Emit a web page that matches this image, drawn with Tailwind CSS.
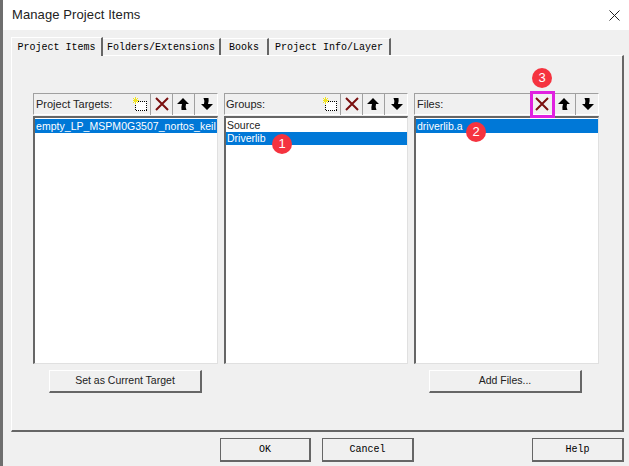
<!DOCTYPE html>
<html lang="en">
<head>
  <meta charset="UTF-8">
  <title>Manage Project Items</title>
  <script src="https://cdn.jsdelivr.net/npm/@tailwindcss/browser@4"></script>
</head>
<body class="w-[629px] h-[466px] overflow-hidden bg-[#f0f0f0] font-['Liberation_Sans',sans-serif] text-[11px] text-black">
<div class="relative w-[629px] h-[466px] flex flex-col">
  <!-- title bar -->
  <div class="h-[30px] bg-white flex items-center justify-between pl-[12px] pr-[9px] text-[13px] text-[#222]">
    <span class="tracking-[0.1px]">Manage Project Items</span>
    <svg width="11" height="11" viewBox="0 0 11 11" fill="none" stroke="#222" stroke-width="1"><path d="M0.500 0.500l10 10M10.500 0.500l-10 10"/></svg>
  </div>

  <!-- tabs -->
  <div class="h-[25px] pl-[11px] pt-[7px] flex items-end font-['Liberation_Mono',monospace] text-[10px] text-black">
    <div class="h-[19px] w-[92px] flex items-center justify-center bg-[#f0f0f0] border-t border-l border-white border-r-2 border-r-[#666] relative z-10 top-px">Project Items</div>
    <div class="h-[17px] w-[118px] flex items-center justify-center border-t border-white border-r-2 border-r-[#666]">Folders/Extensions</div>
    <div class="h-[17px] w-[48px] flex items-center justify-center border-t border-white border-r-2 border-r-[#666]">Books</div>
    <div class="h-[17px] w-[122px] flex items-center justify-center border-t border-white border-r-2 border-r-[#666]">Project Info/Layer</div>
  </div>

  <!-- tab panel -->
  <div class="ml-[11px] w-[613px] h-[377px] border-t border-l border-white border-r-2 border-r-[#666] border-b-2 border-b-[#666] pt-[37px] pl-[21px]">
    <div class="flex gap-[6px]">
      <div class="w-[185px]">
        <div class="h-[22px] flex items-center justify-between border border-[#a0a0a0] border-b-white border-r-white pl-[2px] mb-[1px]">
          <span class="text-[#222]">Project Targets:</span>
          <div class="flex">
            <div class="w-[21px] h-[21px] flex items-center justify-center border-r border-[#a0a0a0]">
              <svg width="15" height="15" viewBox="0 0 15 15" shape-rendering="crispEdges"><rect x="2.5" y="4.5" width="11" height="9" fill="#fff" stroke="#000" stroke-dasharray="1 1"/><path d="M0 1l5 5M5 1L0 6M2.500 0v7M0 3.500h6" stroke="#f2e41c" stroke-width="1"/></svg>
            </div>
            <div class="w-[22px] h-[21px] flex items-center justify-center border-r border-[#a0a0a0]">
              <svg width="14" height="14" viewBox="0 0 14 14" fill="none" stroke="#7a1010" stroke-width="2"><path d="M1 1l12 12M13 1L1 13"/></svg>
            </div>
            <div class="w-[22px] h-[21px] flex items-center justify-center border-r border-[#a0a0a0]">
              <svg width="13" height="14" viewBox="0 0 13 14"><path d="M6 1L12 7H9Q8 10 9.500 13H4.500Q4 10 5 7H0Z" fill="#000"/></svg>
            </div>
            <div class="w-[22px] h-[21px] flex items-center justify-center">
              <svg width="13" height="14" viewBox="0 0 13 14"><path d="M7 13L13 7H8Q9 4 8.500 1H3.500Q5 4 4 7H1Z" fill="#000"/></svg>
            </div>
          </div>
        </div>
        <div class="h-[248px] bg-white border-t-2 border-l-2 border-[#666] border-r border-b border-r-[#e0e0e0] border-b-[#e0e0e0] pt-px">
          <div class="h-[14px] leading-[14px] bg-[#0078d7] text-white pl-[1px] text-[10.5px] tracking-[0.04px] whitespace-nowrap">empty_LP_MSPM0G3507_nortos_keil</div>
        </div>
      </div>

      <div class="w-[184px]">
        <div class="h-[22px] flex items-center justify-between border border-[#a0a0a0] border-b-white border-r-white pl-[1px] mb-[1px]">
          <span class="text-[#222]">Groups:</span>
          <div class="flex">
            <div class="w-[21px] h-[21px] flex items-center justify-center border-r border-[#a0a0a0]">
              <svg width="15" height="15" viewBox="0 0 15 15" shape-rendering="crispEdges"><rect x="2.5" y="4.5" width="11" height="9" fill="#fff" stroke="#000" stroke-dasharray="1 1"/><path d="M0 1l5 5M5 1L0 6M2.500 0v7M0 3.500h6" stroke="#f2e41c" stroke-width="1"/></svg>
            </div>
            <div class="w-[22px] h-[21px] flex items-center justify-center border-r border-[#a0a0a0]">
              <svg width="14" height="14" viewBox="0 0 14 14" fill="none" stroke="#7a1010" stroke-width="2"><path d="M1 1l12 12M13 1L1 13"/></svg>
            </div>
            <div class="w-[22px] h-[21px] flex items-center justify-center border-r border-[#a0a0a0]">
              <svg width="13" height="14" viewBox="0 0 13 14"><path d="M6 1L12 7H9Q8 10 9.500 13H4.500Q4 10 5 7H0Z" fill="#000"/></svg>
            </div>
            <div class="w-[22px] h-[21px] flex items-center justify-center">
              <svg width="13" height="14" viewBox="0 0 13 14"><path d="M7 13L13 7H8Q9 4 8.500 1H3.500Q5 4 4 7H1Z" fill="#000"/></svg>
            </div>
          </div>
        </div>
        <div class="h-[248px] bg-white border-t-2 border-l-2 border-[#666] border-r border-b border-r-[#e0e0e0] border-b-[#e0e0e0] pt-px text-[10.5px]">
          <div class="h-[13px] leading-[13px] pl-[1px] text-[#222]">Source</div>
          <div class="h-[13px] leading-[13px] bg-[#0078d7] text-white pl-[1px]">Driverlib</div>
        </div>
      </div>

      <div class="w-[185px]">
        <div class="h-[22px] flex items-center justify-between border border-[#a0a0a0] border-b-white border-r-white pl-[2px] mb-[1px]">
          <span class="text-[#222]">Files:</span>
          <div class="flex">
            <div class="w-[22px] h-[21px] flex items-center justify-center">
              <svg width="14" height="14" viewBox="0 0 14 14" fill="none" stroke="#7a1010" stroke-width="2"><path d="M1 1l12 12M13 1L1 13"/></svg>
            </div>
            <div class="w-[23px] h-[21px] flex items-center justify-center border-r border-[#a0a0a0]">
              <svg width="13" height="14" viewBox="0 0 13 14"><path d="M6 1L12 7H9Q8 10 9.500 13H4.500Q4 10 5 7H0Z" fill="#000"/></svg>
            </div>
            <div class="w-[22px] h-[21px] flex items-center justify-center">
              <svg width="13" height="14" viewBox="0 0 13 14"><path d="M7 13L13 7H8Q9 4 8.500 1H3.500Q5 4 4 7H1Z" fill="#000"/></svg>
            </div>
          </div>
        </div>
        <div class="h-[248px] bg-white border-t-2 border-l-2 border-[#666] border-r border-b border-r-[#e0e0e0] border-b-[#e0e0e0] pt-px text-[10.5px]">
          <div class="h-[14px] leading-[14px] bg-[#0078d7] text-white pl-[1px]">driverlib.a</div>
        </div>
      </div>
    </div>

    <div class="flex mt-[6px] text-[10.5px]">
      <button class="ml-[16px] w-[153px] h-[23px] flex items-center justify-center border-t border-l border-white border-r-2 border-b-2 border-r-[#666] border-b-[#666] text-[#222]">Set as Current Target</button>
      <button class="ml-[227px] w-[153px] h-[23px] flex items-center justify-center border-t border-l border-white border-r-2 border-b-2 border-r-[#666] border-b-[#666] text-[#222]">Add Files...</button>
    </div>
  </div>

  <!-- dialog buttons -->
  <div class="flex pl-[220px] mt-[6px] font-['Liberation_Mono',monospace] text-[10px] text-black">
    <button class="w-[91px] h-[24px] flex items-center justify-center border border-[#666] border-r-2 border-b-2">OK</button>
    <button class="ml-[11px] w-[92px] h-[24px] flex items-center justify-center border border-[#666] border-r-2 border-b-2">Cancel</button>
    <button class="ml-[118px] w-[92px] h-[24px] flex items-center justify-center border border-[#666] border-r-2 border-b-2">Help</button>
  </div>

  <!-- left window edge -->
  <div class="absolute left-0 top-0 w-[3px] h-full bg-[#6e6e6e]"></div>

  <!-- annotations -->
  <div class="absolute left-[530px] top-[91px] w-[25px] h-[27px] border-[3px] border-[#e020e0]"></div>
  <div class="absolute left-[272px] top-[134px] w-[20px] h-[20px] rounded-full bg-[#f5333f] text-white text-[13px] flex items-center justify-center">1</div>
  <div class="absolute left-[466px] top-[122px] w-[20px] h-[20px] rounded-full bg-[#f5333f] text-white text-[13px] flex items-center justify-center">2</div>
  <div class="absolute left-[532px] top-[68px] w-[20px] h-[20px] rounded-full bg-[#f5333f] text-white text-[13px] flex items-center justify-center">3</div>
</div>
</body>
</html>
